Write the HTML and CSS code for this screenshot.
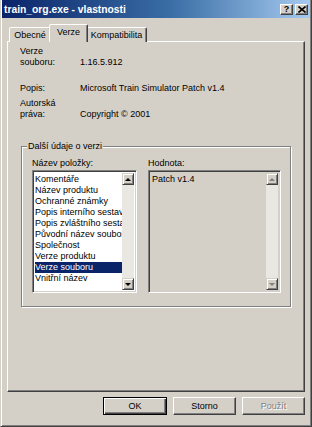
FILE: index.html
```html
<!DOCTYPE html>
<html lang="cs">
<head>
  <meta charset="UTF-8" />
  <title>train_org.exe - vlastnosti</title>
  <link rel="stylesheet" href="styles.css">
</head>
<body>
  <div class="window">
    <div class="titlebar">
      <span class="title">train_org.exe - vlastnosti</span>
      <span class="tb-btn help">?</span>
      <span class="tb-btn close">
        <svg width="8" height="7" viewBox="0 0 8 7"><path d="M0.5 0.5 L7.5 6.5 M7.5 0.5 L0.5 6.5" stroke="#000" stroke-width="1.6" fill="none"/></svg>
      </span>
    </div>

    <div class="tabs">
      <div class="tab">Obecné</div>
      <div class="tab active">Verze</div>
      <div class="tab">Kompatibilita</div>
    </div>

    <div class="panel">
      <div class="prop">
        <div class="prop-label">Verze<br>souboru:</div>
        <div class="prop-value">1.16.5.912</div>
      </div>
      <div class="prop prop-popis">
        <div class="prop-label">Popis:</div>
        <div class="prop-value">Microsoft Train Simulator Patch v1.4</div>
      </div>
      <div class="prop prop-copy">
        <div class="prop-label">Autorská<br>práva:</div>
        <div class="prop-value">Copyright © 2001</div>
      </div>

      <fieldset class="group">
        <legend>Další údaje o verzi</legend>
        <div class="cols">
          <div class="col col-left">
            <div class="col-label">Název položky:</div>
            <div class="listbox">
              <div class="items">
                <div class="item">Komentáře</div>
                <div class="item">Název produktu</div>
                <div class="item">Ochranné známky</div>
                <div class="item">Popis interního sestavení</div>
                <div class="item">Popis zvláštního sestavení</div>
                <div class="item">Původní název souboru</div>
                <div class="item">Společnost</div>
                <div class="item">Verze produktu</div>
                <div class="item selected">Verze souboru</div>
                <div class="item">Vnitřní název</div>
              </div>
              <div class="scrollbar">
                <div class="sb-btn"><span class="arrow up"></span></div>
                <div class="sb-track"></div>
                <div class="sb-btn"><span class="arrow down"></span></div>
              </div>
            </div>
          </div>
          <div class="col col-right">
            <div class="col-label">Hodnota:</div>
            <div class="listbox valuebox">
              <div class="items">Patch v1.4</div>
              <div class="scrollbar">
                <div class="sb-btn"><span class="arrow up dim"></span></div>
                <div class="sb-track"></div>
                <div class="sb-btn"><span class="arrow down dim"></span></div>
              </div>
            </div>
          </div>
        </div>
      </fieldset>
    </div>

    <div class="buttons">
      <button class="btn default">OK</button>
      <button class="btn">Storno</button>
      <button class="btn disabled">Použít</button>
    </div>
  </div>
</body>
</html>
```

FILE: styles.css
```css
*, *::before, *::after { box-sizing: border-box; }
body { margin: 0; background: #d4d0c8; font-family: 'Liberation Sans', Arial, sans-serif; font-size: 9px; color: #000; }

/* Window frame */
.window { width: 312px; height: 427px; display: flex; flex-direction: column; border: 1px solid; border-top: none; border-color: #d4d0c8 #404040 #404040 #d4d0c8; box-shadow: inset 1px 0 #fff, inset -1px -1px #808080; padding: 0 1px 1px 1px; background: #d4d0c8; }

/* Title bar */
.titlebar { height: 18px; display: flex; align-items: center; gap: 2px; padding: 0 2px 0 2px; background: linear-gradient(to right, #0a246a, #3a6ea5 55%, #a6caf0); color: #fff; font-weight: bold; font-size: 10.3px; }
.title { flex: 1; }
.tb-btn { width: 13px; height: 11px; display: flex; align-items: center; justify-content: center; background: #d4d0c8; color: #000; font-size: 9px; font-weight: bold; border: 1px solid; border-color: #fff #404040 #404040 #fff; box-shadow: inset -1px -1px #808080; }

/* Tabs */
.tabs { display: flex; align-items: flex-end; height: 17px; margin-top: 7px; padding-left: 7px; position: relative; z-index: 1; margin-bottom: -1px; }
.tab { height: 15px; padding-top: 2px; text-align: center; background: #d4d0c8; border: 1px solid; border-bottom: none; border-color: #fff #404040 transparent #fff; border-radius: 2px 2px 0 0; box-shadow: inset -1px 0 #808080; }
.tab:nth-child(1) { width: 42px; }
.tab:nth-child(3) { width: 61px; }
.tab.active { width: 39px; height: 18px; margin: 0 -2px; padding-top: 2px; position: relative; z-index: 2; }

/* Panel */
.panel { height: 351px; margin: 0 5px; padding: 4px 0 0 12px; border: 1px solid; border-color: #fff #404040 #404040 #fff; box-shadow: inset -1px -1px #808080; }
.prop { display: flex; align-items: flex-end; line-height: 11px; }
.prop-label { width: 60px; }
.prop-popis { margin-top: 15px; }
.prop-copy { margin-top: 4px; }

/* Group box */
.group { width: 270px; height: 166px; margin: 21px 0 0 1px; padding: 6px 9px 0 10px; border: 1px solid #808080; box-shadow: 1px 1px 0 #fff, inset 1px 1px 0 #fff; }
.group legend { margin-left: -5px; padding: 0 1px; line-height: 11px; background: #d4d0c8; }
.cols { display: flex; gap: 11px; line-height: 11px; }
.col-left { width: 105px; }
.col-right { width: 133px; }
.col-label { height: 12px; }

/* List boxes */
.listbox { height: 123px; display: flex; border: 1px solid; border-color: #808080 #fff #fff #808080; box-shadow: inset 1px 1px #404040, inset -1px -1px #d4d0c8; padding: 2px; background: #fff; }
.items { flex: 1; overflow: hidden; white-space: nowrap; padding-top: 1px; }
.item { height: 11px; }
.item.selected { background: #0a246a; color: #fff; }
.valuebox { background: #d4d0c8; }
.valuebox .items { padding-left: 1px; }

/* Scrollbar */
.scrollbar { width: 12px; display: flex; flex-direction: column; }
.sb-btn { height: 12px; display: flex; align-items: center; justify-content: center; background: #d4d0c8; border: 1px solid; border-color: #d4d0c8 #404040 #404040 #d4d0c8; box-shadow: inset 1px 1px #fff, inset -1px -1px #808080; }
.sb-track { flex: 1; background: #e9e7e2; }
.arrow { width: 0; height: 0; border-left: 3px solid transparent; border-right: 3px solid transparent; }
.arrow.up { border-bottom: 3px solid #000; }
.arrow.down { border-top: 3px solid #000; }
.arrow.up.dim { border-bottom-color: #808080; }
.arrow.down.dim { border-top-color: #808080; }

/* Dialog buttons */
.buttons { display: flex; justify-content: flex-end; gap: 6px; margin-top: 5px; padding-right: 5px; }
.btn { width: 63px; height: 18px; padding: 0; font: inherit; background: #d4d0c8; color: #000; border: 1px solid; border-color: #fff #404040 #404040 #fff; box-shadow: inset -1px -1px #808080; }
.btn.default { border-color: #000; box-shadow: inset 1px 1px #fff, inset -1px -1px #404040, inset -2px -2px #808080; width: 64px; }
.btn.disabled { color: #808080; text-shadow: 1px 1px #fff; }
```
